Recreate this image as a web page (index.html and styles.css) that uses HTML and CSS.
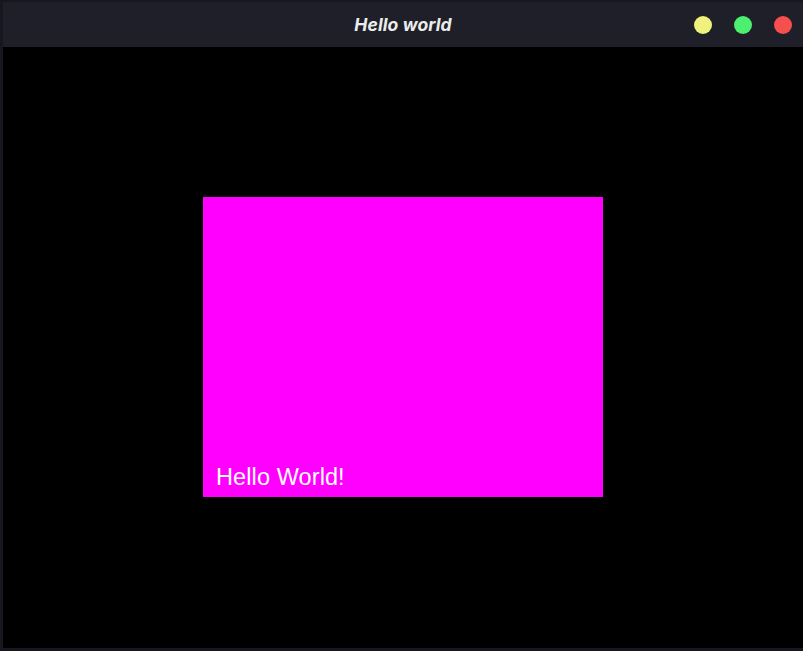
FILE: index.html
```html
<!DOCTYPE html>
<html>
<head>
<meta charset="utf-8">
<link rel="stylesheet" href="styles.css">
</head>
<body>
<div class="window">
  <div class="titlebar">
    <div class="title">Hello world</div>
    <div class="controls">
      <span class="dot dot-yellow"></span>
      <span class="dot dot-green"></span>
      <span class="dot dot-red"></span>
    </div>
  </div>
  <div class="content">
    <div class="canvas">
      <span class="label">Hello World!</span>
    </div>
  </div>
</div>
</body>
</html>
```
FILE: styles.css
```css
html, body {
  margin: 0;
  padding: 0;
  width: 803px;
  height: 651px;
  overflow: hidden;
  background: #17171f;
}
.window {
  margin: 2px 0 0 3px;
  width: 800px;
  height: 646px;
  display: flex;
  flex-direction: column;
}
.titlebar {
  height: 45px;
  flex: none;
  background: #1f1f29;
  display: flex;
  align-items: center;
  justify-content: center;
  position: relative;
}
.title {
  font-family: Inter, "Open Sans", sans-serif;
  font-weight: 700;
  font-style: italic;
  font-size: 17.5px;
  color: #ececec;
  letter-spacing: 0.1px;
  margin-top: -1px;
}
.controls {
  position: absolute;
  right: 11px;
  top: 14px;
  display: flex;
  gap: 22px;
}
.dot {
  width: 18px;
  height: 18px;
  border-radius: 50%;
  display: block;
}
.dot-yellow { background: #f0f07c; }
.dot-green { background: #4cf06e; }
.dot-red { background: #f5504e; }
.content {
  flex: 1;
  background: #000;
  display: flex;
  align-items: center;
  justify-content: center;
}
.canvas {
  width: 400px;
  height: 300px;
  background: #ff00ff;
  display: flex;
  align-items: flex-end;
  box-sizing: border-box;
  padding: 0 0 8px 13px;
  margin-top: -1px;
}
.label {
  font-family: "Liberation Sans", Arial, sans-serif;
  font-size: 23.5px;
  line-height: 23px;
  letter-spacing: 0.1px;
  color: #fff;
}
```
